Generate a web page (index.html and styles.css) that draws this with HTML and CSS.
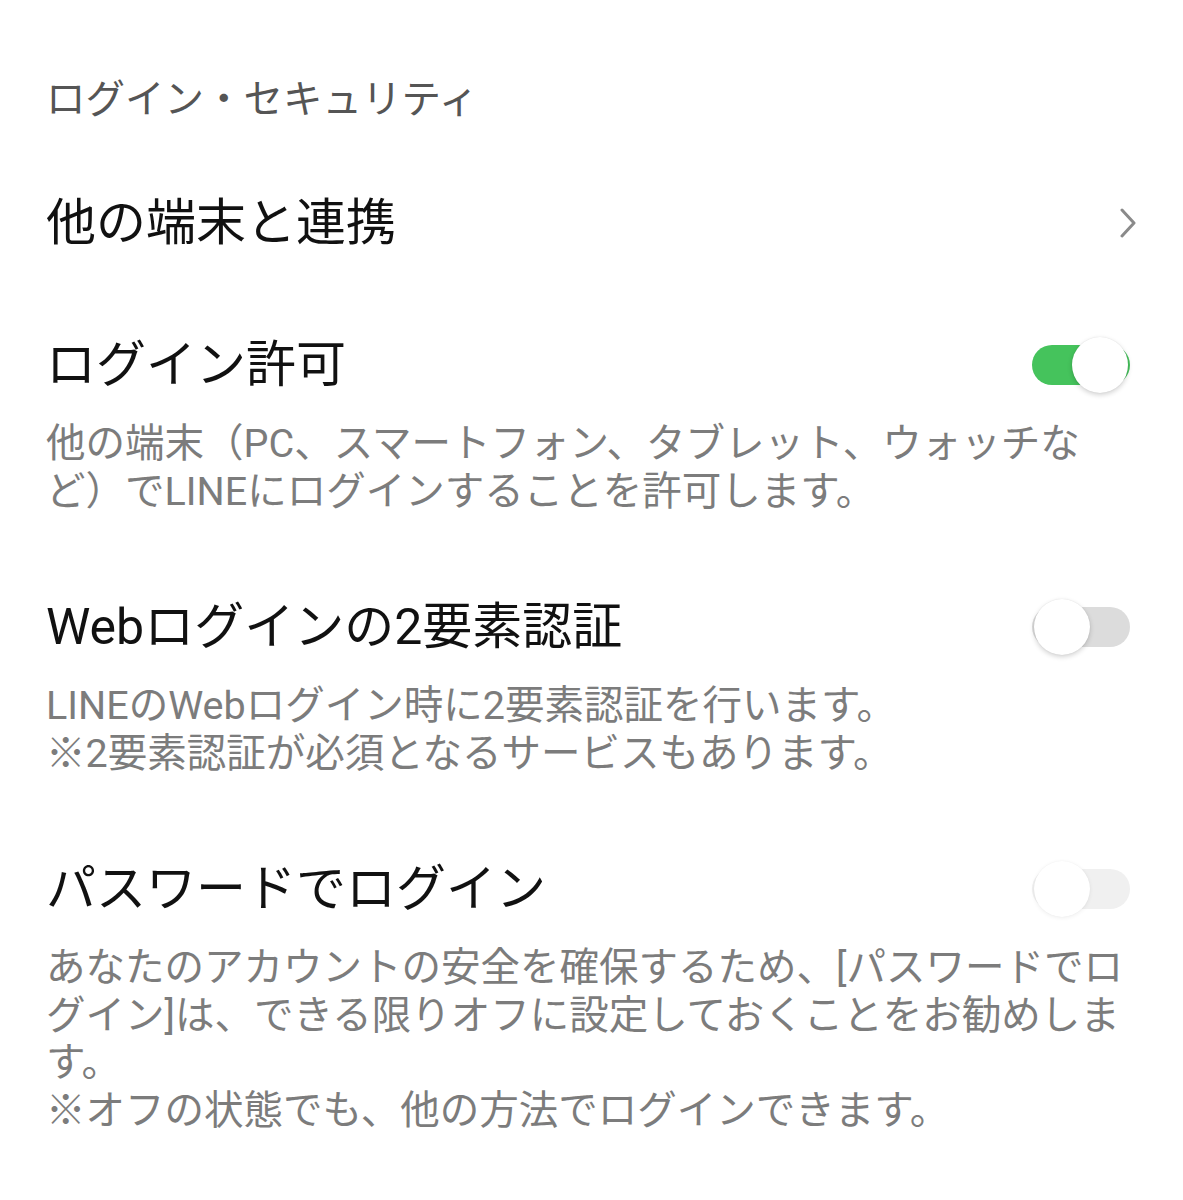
FILE: index.html
```html
<!DOCTYPE html>
<html lang="ja">
<head>
  <meta charset="UTF-8">
  <title>ログイン・セキュリティ</title>
  <link rel="stylesheet" href="styles.css">
</head>
<body>

  <div class="page">
    <h2 class="section-title">ログイン・セキュリティ</h2>

    <div class="row">
      <div class="row-head">
        <span class="row-title">他の端末と連携</span>
        <svg class="chevron" width="16" height="30" viewBox="0 0 16 30">
          <polyline points="2,2 14,15 2,28" fill="none" stroke="#8a8a8a" stroke-width="3" stroke-linecap="round" stroke-linejoin="round"/>
        </svg>
      </div>
    </div>

    <div class="row">
      <div class="row-head">
        <span class="row-title">ログイン許可</span>
        <span class="toggle on"><span class="thumb"></span></span>
      </div>
      <p class="row-desc">他の端末（PC、スマートフォン、タブレット、ウォッチな<br>ど）でLINEにログインすることを許可します。</p>
    </div>

    <div class="row">
      <div class="row-head">
        <span class="row-title">Webログインの2要素認証</span>
        <span class="toggle"><span class="thumb"></span></span>
      </div>
      <p class="row-desc">LINEのWebログイン時に2要素認証を行います。<br>※2要素認証が必須となるサービスもあります。</p>
    </div>

    <div class="row">
      <div class="row-head">
        <span class="row-title">パスワードでログイン</span>
        <span class="toggle disabled"><span class="thumb"></span></span>
      </div>
      <p class="row-desc">あなたのアカウントの安全を確保するため、[パスワードでロ<br>グイン]は、できる限りオフに設定しておくことをお勧めしま<br>す。<br>※オフの状態でも、他の方法でログインできます。</p>
    </div>
  </div>

</body>
</html>
```

FILE: styles.css
```css
body {
  margin: 0;
  background: #fff;
  font-family: Roboto, "Noto Sans CJK JP", sans-serif;
}
.page {
  padding: 0 53px 0 46px;
}
.section-title {
  margin: 75px 0 27px;
  font-size: 39.5px;
  line-height: 50px;
  font-weight: normal;
  color: #555;
  white-space: nowrap;
}
.row {
  padding: 41px 0;
}
.row-head {
  display: flex;
  align-items: center;
  justify-content: space-between;
  height: 60px;
}
.row-title {
  font-size: 50px;
  line-height: 60px;
  color: #111;
  white-space: nowrap;
}
.row-desc {
  margin: 25px 0 0;
  font-size: 39.5px;
  line-height: 47.5px;
  color: #7c7c7c;
  white-space: nowrap;
}
.chevron {
  margin-right: -6px;
}
.toggle {
  position: relative;
  flex: none;
  width: 98px;
  height: 40px;
  border-radius: 20px;
  background: #dcdcdc;
}
.toggle .thumb {
  position: absolute;
  top: -8px;
  left: 2px;
  width: 56px;
  height: 56px;
  border-radius: 50%;
  background: #fff;
  box-shadow: 0 2px 5px rgba(0,0,0,0.18), 0 0 1px rgba(0,0,0,0.12);
}
.toggle.on {
  background: #45c35c;
}
.toggle.on .thumb {
  left: 40px;
}
.toggle.disabled {
  background: #f0f0f0;
}
.toggle.disabled .thumb {
  box-shadow: 0 1px 4px rgba(0,0,0,0.07), 0 0 1px rgba(0,0,0,0.06);
}
```
